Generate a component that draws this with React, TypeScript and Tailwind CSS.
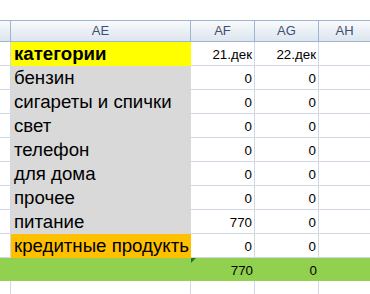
import React from 'react';

type Row = { name: string; af: string; ag: string; fill: string; bold?: boolean };

const ROWS: Row[] = [
  { name: 'категории', af: '21.дек', ag: '22.дек', fill: 'bg-[#ffff00] border-[#ffff00]', bold: true },
  { name: 'бензин', af: '0', ag: '0', fill: 'bg-[#d9d9d9] border-[#d9d9d9]' },
  { name: 'сигареты и спички', af: '0', ag: '0', fill: 'bg-[#d9d9d9] border-[#d9d9d9]' },
  { name: 'свет', af: '0', ag: '0', fill: 'bg-[#d9d9d9] border-[#d9d9d9]' },
  { name: 'телефон', af: '0', ag: '0', fill: 'bg-[#d9d9d9] border-[#d9d9d9]' },
  { name: 'для дома', af: '0', ag: '0', fill: 'bg-[#d9d9d9] border-[#d9d9d9]' },
  { name: 'прочее', af: '0', ag: '0', fill: 'bg-[#d9d9d9] border-[#d9d9d9]' },
  { name: 'питание', af: '770', ag: '0', fill: 'bg-[#d9d9d9] border-[#d9d9d9]' },
  { name: 'кредитные продукть', af: '0', ag: '0', fill: 'bg-[#ffc000] border-[#ffc000]' },
];

const COLS = 'grid grid-cols-[11px_180px_64px_64px_1fr]';
const grid = 'border-r border-b border-[#d0d7e5]';
const num = 'flex items-end justify-end pr-[2px] pb-[3px] text-[13.33px] leading-[15px]';
const head =
  'h-[21px] border-r border-b border-[#9eb6ce] bg-gradient-to-b from-[#f9fafc] to-[#dde5ef] flex items-center justify-center text-[13px] text-[#3e5070]';

export default function App() {
  return (
    <div className="w-[370px] h-[294px] bg-white overflow-hidden font-['Liberation_Sans',Arial,sans-serif]">
      <div className="h-[21px] border-b border-[#9eb6ce]" />

      {/* column letters */}
      <div className={COLS}>
        <div className={head} />
        <div className={head}>AE</div>
        <div className={head}>AF</div>
        <div className={head}>AG</div>
        <div className={head + ' border-r-0'}>AH</div>
      </div>

      {ROWS.map((r) => (
        <div key={r.name} className={`${COLS} h-[24px] text-black`}>
          <div className={grid} />
          <div
            className={`border-r border-b ${r.fill} flex items-end pl-[3px] pb-[1px] leading-[20px] whitespace-nowrap overflow-hidden text-[18.67px] ${
              r.bold ? 'font-bold' : ''
            }`}
          >
            {r.name}
          </div>
          <div className={`${grid} ${num}`}>{r.af}</div>
          <div className={`${grid} ${num}`}>{r.ag}</div>
          <div className="border-b border-[#d0d7e5]" />
        </div>
      ))}

      {/* totals */}
      <div className={`${COLS} h-[23px] bg-[#92d050] text-black`}>
        <div />
        <div />
        <div className={`relative ${num}`}>
          <span className="absolute left-0 top-0 w-0 h-0 border-t-[5px] border-r-[5px] border-t-[#1e7a1e] border-r-transparent" />
          770
        </div>
        <div className={num}>0</div>
        <div />
      </div>

      <div className={`${COLS} h-[24px]`}>
        <div className={grid} />
        <div className={grid} />
        <div className={grid} />
        <div className={grid} />
        <div className="border-b border-[#d0d7e5]" />
      </div>
    </div>
  );
}
